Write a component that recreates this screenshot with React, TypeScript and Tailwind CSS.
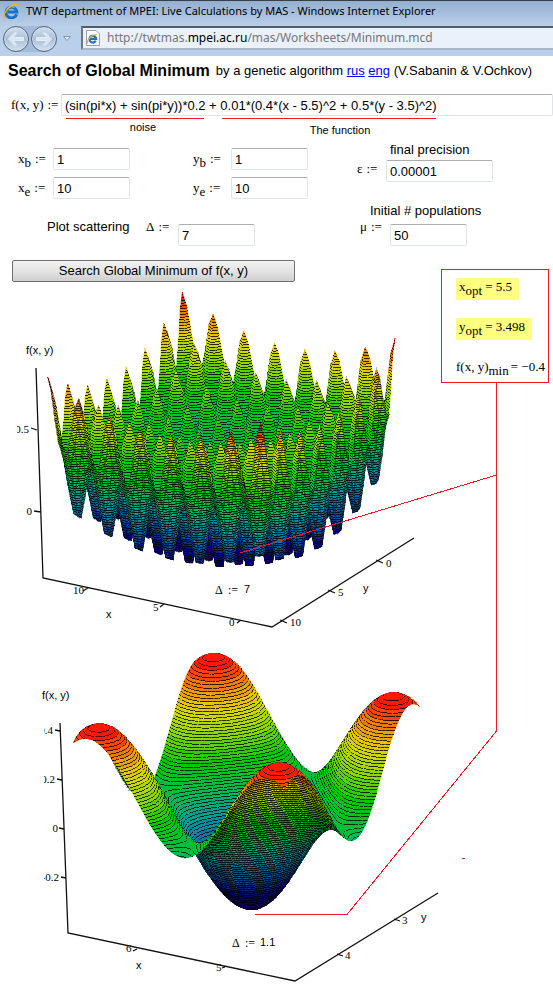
import React, { useMemo, useState } from "react";

type Point = [number, number];
type Vertex = [number, number, number];

interface SurfaceProps {
  half: number;
  cells: number;
  // screen position of (x0, y0) at z = 0, and the screen vectors of one unit
  origin: Point;
  ux: Point;
  uy: Point;
  uz: Point;
  zMin: number;
  zMax: number;
}

const X0 = 5.5;
const Y0 = 3.5;
const LEVELS = 75;

const f = (x: number, y: number) =>
  (Math.sin(Math.PI * x) + Math.sin(Math.PI * y)) * 0.2 +
  0.01 * (0.4 * (x - X0) ** 2 + 0.5 * (y - Y0) ** 2);

const stops: [number, number, number, number][] = [
  [0, 48, 0, 130],
  [0.08, 20, 0, 140],
  [0.12, 0, 0, 145],
  [0.22, 0, 80, 165],
  [0.36, 0, 150, 160],
  [0.46, 0, 185, 85],
  [0.58, 0, 200, 0],
  [0.7, 140, 215, 0],
  [0.8, 225, 215, 0],
  [0.89, 240, 135, 0],
  [0.97, 255, 30, 0],
  [1, 255, 15, 0],
];

const colorAt = (t: number) => {
  let k = 1;
  while (k < stops.length - 1 && stops[k][0] < t) k++;
  const a = stops[k - 1];
  const b = stops[k];
  const m = Math.min(1, Math.max(0, (t - a[0]) / (b[0] - a[0])));
  const c = [1, 2, 3].map((i) => Math.round(a[i] + (b[i] - a[i]) * m));
  return `rgb(${c[0]},${c[1]},${c[2]})`;
};

// keeps the part of a polygon above (sign 1) or below (sign -1) a level
const clip = (poly: Vertex[], level: number, sign: number) => {
  const out: Vertex[] = [];
  poly.forEach((p, i) => {
    const q = poly[(i + 1) % poly.length];
    const dp = (p[2] - level) * sign;
    const dq = (q[2] - level) * sign;
    if (dp >= 0) out.push(p);
    if (dp >= 0 !== dq >= 0) {
      const m = dp / (dp - dq);
      out.push([p[0] + (q[0] - p[0]) * m, p[1] + (q[1] - p[1]) * m, level]);
    }
  });
  return out;
};

const xy = (p: Vertex | Point) => `${p[0].toFixed(1)} ${p[1].toFixed(1)}`;

// true when a triangle shows its lower side
const isUnderside = ([p, q, r]: Vertex[]) =>
  (q[0] - p[0]) * (r[1] - p[1]) - (q[1] - p[1]) * (r[0] - p[0]) < 0;

const Surface: React.FC<SurfaceProps> = ({ half, cells, origin, ux, uy, uz, zMin, zMax }) => {
  const layers = useMemo(() => {
    const step = (2 * half) / cells;
    const bandSize = 3;
    const vertex = (i: number, j: number): Vertex => {
      // i runs towards smaller x and j towards larger y, both to the viewer
      const dx = half - i * step;
      const dy = -half + j * step;
      const z = f(X0 + dx, Y0 + dy);
      return [
        origin[0] + dx * ux[0] + dy * uy[0] + z * uz[0],
        origin[1] + dx * ux[1] + dy * uy[1] + z * uz[1],
        ((z - zMin) / (zMax - zMin)) * LEVELS,
      ];
    };
    const result: { fills: [number, string][]; lines: string; shade: string }[] = [];
    for (let d = 0; d <= 2 * (cells - 1); d++) {
      const fills = new Map<number, string>();
      let lines = "";
      let shade = "";
      for (let i = Math.max(0, d - cells + 1); i <= Math.min(d, cells - 1); i++) {
        const j = d - i;
        const a = vertex(i, j);
        const b = vertex(i + 1, j);
        const c = vertex(i + 1, j + 1);
        const e = vertex(i, j + 1);
        for (const tri of [[a, b, e], [b, c, e]]) {
          if (isUnderside(tri)) shade += "M" + tri.map(xy).join("L") + "Z";
          const lo = Math.min(tri[0][2], tri[1][2], tri[2][2]);
          const hi = Math.max(tri[0][2], tri[1][2], tri[2][2]);
          for (let k = Math.floor(lo / bandSize); k * bandSize <= hi; k++) {
            const part = clip(clip(tri, k * bandSize, 1), (k + 1) * bandSize, -1);
            if (part.length < 3) continue;
            fills.set(k, (fills.get(k) || "") + "M" + part.map(xy).join("L") + "Z");
          }
          for (let n = Math.ceil(lo); n <= hi; n++) {
            const ends: Point[] = [];
            tri.forEach((p, s) => {
              const q = tri[(s + 1) % 3];
              if (p[2] >= n !== q[2] >= n) {
                const m = (n - p[2]) / (q[2] - p[2]);
                ends.push([p[0] + (q[0] - p[0]) * m, p[1] + (q[1] - p[1]) * m]);
              }
            });
            if (ends.length === 2) lines += `M${xy(ends[0])}L${xy(ends[1])}`;
          }
        }
      }
      result.push({ fills: [...fills], lines, shade });
    }
    return result;
  }, [half, cells, origin, ux, uy, uz, zMin, zMax]);

  return (
    <g shapeRendering="crispEdges">
      {layers.map((layer, d) => (
        <g key={d}>
          {layer.fills.map(([k, path]) => {
            const color = colorAt((k * 3 + 1.5) / LEVELS);
            return <path key={k} d={path} fill={color} stroke={color} strokeWidth="0.4" />;
          })}
          <path d={layer.lines} stroke="#000" strokeWidth="0.8" fill="none" />
          <path d={layer.shade} stroke="#000" strokeWidth="1.5" strokeOpacity="0.3" fill="none" />
        </g>
      ))}
    </g>
  );
};

const wide = {
  origin: [226, 493] as Point,
  ux: [-15.2, -3.3] as Point,
  uy: [-9.6, 6.1] as Point,
  uz: [-5.4, -161] as Point,
};

const narrow = {
  origin: [249, 810] as Point,
  ux: [-89.5, -19.5] as Point,
  uy: [-57, 35] as Point,
  uz: [-7.5, -245] as Point,
};

const PlotText: React.FC<{ x: number; y: number; end?: boolean; children: React.ReactNode }> = ({
  x,
  y,
  end,
  children,
}) => (
  <text x={x} y={y} textAnchor={end ? "end" : "start"} className="font-['Liberation_Serif',serif] text-[11px]">
    {children}
  </text>
);

const WidePlot = () => (
  <svg viewBox="0 283 441 357" width="441" height="357" className="block shrink-0" role="img" aria-label="f(x, y), scattering 7">
    <Surface half={7} cells={49} zMin={-0.36} zMax={0.841} {...wide} />
    <path
      d="M36 368L43 578L272 627L414 538M31 428L37 430M34 511L41 512M83 591L88 588M160 607L164 604M237 623L241 620M376 560L383 563M328 590L335 593M280 620L287 623"
      stroke="#111"
      strokeWidth="1.3"
      fill="none"
    />
    <clipPath id="wide-labels">
      <rect x="17" y="283" width="424" height="357" />
    </clipPath>
    <g clipPath="url(#wide-labels)">
      <PlotText x={29} y={433} end>0.5</PlotText>
      <PlotText x={32} y={515} end>0</PlotText>
      <PlotText x={73} y={594}>10</PlotText>
      <PlotText x={153} y={611}>5</PlotText>
      <PlotText x={229} y={626}>0</PlotText>
      <PlotText x={386} y={567}>0</PlotText>
      <PlotText x={338} y={596}>5</PlotText>
      <PlotText x={290} y={626}>10</PlotText>
    </g>
    <g className="font-['Liberation_Sans',sans-serif] text-[11px]">
      <text x="26" y="354">f(x, y)</text>
      <text x="106" y="618">x</text>
      <text x="363" y="592">y</text>
      <text x="244" y="593">7</text>
    </g>
    <text x="215" y="594" className="font-['Liberation_Serif',serif] text-xs">Δ</text>
    <text x="228" y="594" className="font-['Liberation_Serif',serif] text-xs">:=</text>
  </svg>
);

const NarrowPlot = () => (
  <svg viewBox="0 640 441 358" width="441" height="358" className="block" role="img" aria-label="f(x, y), scattering 1.1">
    <Surface half={1.184} cells={64} zMin={-0.4} zMax={0.409} {...narrow} />
    <path
      d="M60 723L68 933L295 981L438 893M55 730L60 731M57 779L62 780M59 828L64 829M61 877L66 878M133 951L137 949M222 968L225 967M394 919L400 921M337 954L343 956"
      stroke="#111"
      strokeWidth="1.3"
      fill="none"
    />
    <clipPath id="narrow-labels">
      <rect x="44" y="640" width="397" height="358" />
    </clipPath>
    <g clipPath="url(#narrow-labels)">
      <PlotText x={53} y={734} end>0.4</PlotText>
      <PlotText x={55} y={783} end>0.2</PlotText>
      <PlotText x={58} y={832} end>0</PlotText>
      <PlotText x={59} y={881} end>-0.2</PlotText>
      <PlotText x={126} y={952}>6</PlotText>
      <PlotText x={216} y={971}>5</PlotText>
      <PlotText x={402} y={924}>3</PlotText>
      <PlotText x={345} y={959}>4</PlotText>
    </g>
    <g className="font-['Liberation_Sans',sans-serif] text-[11px]">
      <text x="42" y="699">f(x, y)</text>
      <text x="136" y="969">x</text>
      <text x="421" y="921">y</text>
      <text x="260" y="946">1.1</text>
    </g>
    <text x="232" y="947" className="font-['Liberation_Serif',serif] text-xs">Δ</text>
    <text x="245" y="947" className="font-['Liberation_Serif',serif] text-xs">:=</text>
  </svg>
);

const ExplorerLogo: React.FC<{ className?: string }> = ({ className }) => (
  <svg viewBox="0 0 16 16" className={className} aria-hidden="true">
    <path
      d="M13.600 11.200A5.400 5.400 0 1 1 13.800 8.900H5"
      fill="none"
      stroke="#1673c8"
      strokeWidth="3"
    />
    <path d="M4 6.200A5 5 0 0 1 11.500 4.600" fill="none" stroke="#5fc0f7" strokeWidth="1.300" />
    <path
      d="M2.600 15C-1 14.400 1.600 7.600 7.400 3.600C11.500 .700 15.800 -.200 15.200 3.600"
      fill="none"
      stroke="#f3b01c"
      strokeWidth="1.500"
    />
  </svg>
);

const NavButton: React.FC<{ label: string; flip?: boolean }> = ({ label, flip }) => (
  <button
    type="button"
    aria-label={label}
    className="flex h-[26px] w-[26px] items-center justify-center rounded-full border border-[#56697f] bg-linear-to-b from-[#d3e0ee] via-[#aabfd8] to-[#d2e2f3] shadow-[inset_0_0_0_1px_#d3dfec]"
  >
    <svg viewBox="0 0 18 16" className="h-4 w-[18px] shrink-0" aria-hidden="true">
      <path
        d={flip ? "M16.500 8L10.500 2H8.500L12 6.500H1.500V9.500H12L8.500 14H10.500Z" : "M1.500 8L7.500 2H9.500L6 6.500H16.500V9.500H6L9.500 14H7.500Z"}
        fill="#dbe6f2"
        stroke="#e6eef7"
        strokeWidth="1"
      />
    </svg>
  </button>
);

const MathLabel: React.FC<{ id: string; name: string; sub?: string; className?: string }> = ({
  id,
  name,
  sub,
  className,
}) => (
  <label htmlFor={id} className={`flex items-baseline font-['Liberation_Serif',serif] text-[13px] leading-4 ${className || ""}`}>
    <span>{name}</span>
    {sub && <span className="relative top-1">{sub}</span>}
    <span className="ml-1">:=</span>
  </label>
);

const inputClass =
  "block h-[22px] border border-[#dfe3ea] border-t-[#abadb3] bg-white px-[3px] text-[13px] outline-none rounded-xs";

const App: React.FC = () => {
  const [formData, setFormData] = useState({
    formula: "(sin(pi*x) + sin(pi*y))*0.2 + 0.01*(0.4*(x - 5.5)^2 + 0.5*(y - 3.5)^2)",
    xb: "1",
    xe: "10",
    yb: "1",
    ye: "10",
    delta: "7",
    epsilon: "0.00001",
    mu: "50",
  });

  const handleChange = (e: React.ChangeEvent<HTMLInputElement>) => {
    const { name, value } = e.target;
    setFormData({ ...formData, [name]: value });
  };

  const field = (name: keyof typeof formData, width: string) => (
    <input
      id={name}
      name={name}
      value={formData[name]}
      onChange={handleChange}
      className={`${inputClass} ${width}`}
    />
  );

  return (
    <div className="min-h-screen overflow-hidden bg-white font-['Liberation_Sans',Arial,sans-serif] text-black">
      <header className="font-['Noto_Sans',sans-serif]">
        <div className="flex h-[26px] items-center gap-[7px] border-t border-[#3a3f47] bg-linear-to-b from-[#93afd0] to-[#b9cfe9] pr-2 pb-[5px] pl-[3px]">
          <ExplorerLogo className="h-4 w-4 shrink-0" />
          <span className="text-[11px] whitespace-nowrap">
            TWT department of MPEI: Live Calculations by MAS - Windows Internet Explorer
          </span>
        </div>
        <div className="flex h-[30px] items-start bg-[#b9cfea] pl-[3px]">
          <div className="flex gap-[2px] rounded-full bg-[#a3bbd8]">
            <NavButton label="Back" />
            <NavButton label="Forward" flip />
          </div>
          <svg viewBox="0 0 8 5" className="mx-[6px] mt-[10px] h-[5px] w-2" aria-hidden="true">
            <path d="M.5 .5H7.500L4 4.500Z" fill="#e4eefa" stroke="#8397b3" />
          </svg>
          <div className="ml-1 flex h-6 min-w-0 flex-1 items-center gap-[7px] border-2 border-r-0 border-t-[#555b66] border-b-[#a9b6c8] border-l-[#6c7687] bg-[#eaf1fa] pl-[3px]">
            <svg viewBox="0 0 14 16" className="h-4 w-[14px] shrink-0" aria-hidden="true">
              <path d="M.5 .5H10L13.500 4V15.500H.5Z" fill="#fff" stroke="#9aa0a8" />
              <path d="M9.800 10.800A3.400 3.400 0 1 1 10.200 8.800H4" fill="none" stroke="#1673c8" strokeWidth="2.200" />
              <path d="M2 13.500C0 11 5 4.500 11 4.500" fill="none" stroke="#f3b01c" strokeWidth="1.200" />
            </svg>
            <span className="text-xs whitespace-nowrap text-[#777]">
              http://twtmas.<span className="text-black">mpei.ac.ru</span>/mas/Worksheets/Minimum.mcd
            </span>
          </div>
        </div>
      </header>

      <main>
        <div className="flex h-[30px] items-center gap-[6px] pl-2 whitespace-nowrap">
          <h1 className="text-base font-bold">Search of Global Minimum</h1>
          <p className="text-[13px]">
            by a genetic algorithm{" "}
            <a href="#rus" className="text-[#0000ee] underline">rus</a>{" "}
            <a href="#eng" className="text-[#0000ee] underline">eng</a> (V.Sabanin &amp; V.Ochkov)
          </p>
        </div>

        <form onSubmit={(e) => e.preventDefault()}>
          <div className="flex items-center pt-2 pl-[11px]">
            <MathLabel id="formula" name="f(x, y)" className="w-[50px] shrink-0 whitespace-nowrap" />
            {field("formula", "min-w-0 flex-1")}
          </div>
          <div className="flex gap-[18px] pt-[2px] pl-[66px] text-[11px] leading-4">
            <div className="w-[138px] border-t border-[#ed1c24] pl-4 text-center">noise</div>
            <div className="w-[214px] border-t border-[#ed1c24] pt-[3px] pl-[22px] text-center">The function</div>
          </div>

          <div className="flex pt-[10px]">
            <div className="w-[357px] shrink-0">
              <div className="grid grid-cols-[35px_140px_38px_1fr] items-center gap-y-[7px] pl-[18px]">
                <MathLabel id="xb" name="x" sub="b" />
                {field("xb", "w-[77px]")}
                <MathLabel id="yb" name="y" sub="b" />
                {field("yb", "w-[77px]")}
                <MathLabel id="xe" name="x" sub="e" />
                {field("xe", "w-[77px]")}
                <MathLabel id="ye" name="y" sub="e" />
                {field("ye", "w-[77px]")}
              </div>
              <div className="flex items-start pt-[25px] pl-[47px]">
                <span className="w-[99px] text-[13px] leading-[6px]">Plot scattering</span>
                <MathLabel id="delta" name="Δ" className="-mt-[5px] w-8" />
                {field("delta", "w-[77px]")}
              </div>
            </div>
            <div className="-mt-2">
              <div className="grid grid-cols-[29px_auto] justify-start">
                <span className="col-start-2 pl-1 text-[13px] leading-5">final precision</span>
                <MathLabel id="epsilon" name="ε" className="-mt-1 self-center" />
                {field("epsilon", "w-[107px]")}
              </div>
              <div className="grid grid-cols-[30px_auto] justify-start pt-4 pl-[3px]">
                <span className="col-span-2 pl-[10px] text-[13px] leading-[26px]">Initial # populations</span>
                <MathLabel id="mu" name="μ" className="-mt-4 self-center" />
                {field("mu", "w-[77px]")}
              </div>
            </div>
          </div>

          <div className="pt-[14px] pl-3">
            <button
              type="submit"
              className="block h-[22px] w-[283px] rounded-xs border border-[#707070] bg-linear-to-b from-[#f2f2f2] via-[#e4e4e4] to-[#cfcfcf] text-[13px]"
            >
              Search Global Minimum of f(x, y)
            </button>
          </div>
        </form>

        <section className="relative mt-px">
          <div className="flex items-start">
            <WidePlot />
            <div className="-mt-[14px] flex h-[114px] w-[108px] shrink-0 flex-col items-start gap-[18px] border border-[#ed1c24] pt-2 pl-[14px] font-['Liberation_Serif',serif] text-[13px] whitespace-nowrap">
              <output className="flex h-[22px] items-baseline gap-[3px] bg-[#ffff80] pr-[7px] pl-[3px] leading-[18px]">
                <span>x<span className="relative top-1">opt</span></span>
                <span>= 5.5</span>
              </output>
              <output className="flex h-[22px] items-baseline gap-[3px] bg-[#ffff80] pr-[7px] pl-[3px] leading-[18px]">
                <span>y<span className="relative top-1">opt</span></span>
                <span>= 3.498</span>
              </output>
              <output className="flex h-[22px] items-baseline gap-[2px] leading-[18px]">
                <span>f(x, y)<span className="relative top-1">min</span></span>
                <span>= −0.4</span>
              </output>
            </div>
          </div>
          <NarrowPlot />
          {/* leads from the result box to the minimum on both plots */}
          <svg
            viewBox="0 283 553 715"
            width="553"
            height="715"
            className="pointer-events-none absolute top-0 left-0"
            aria-hidden="true"
          >
            <path
              d="M496.500 383V731L347 914.500H255M496.500 475L240 553M462 858.500H465"
              fill="none"
              stroke="#ed1c24"
              shapeRendering="crispEdges"
            />
          </svg>
        </section>
      </main>
    </div>
  );
};

export default App;
